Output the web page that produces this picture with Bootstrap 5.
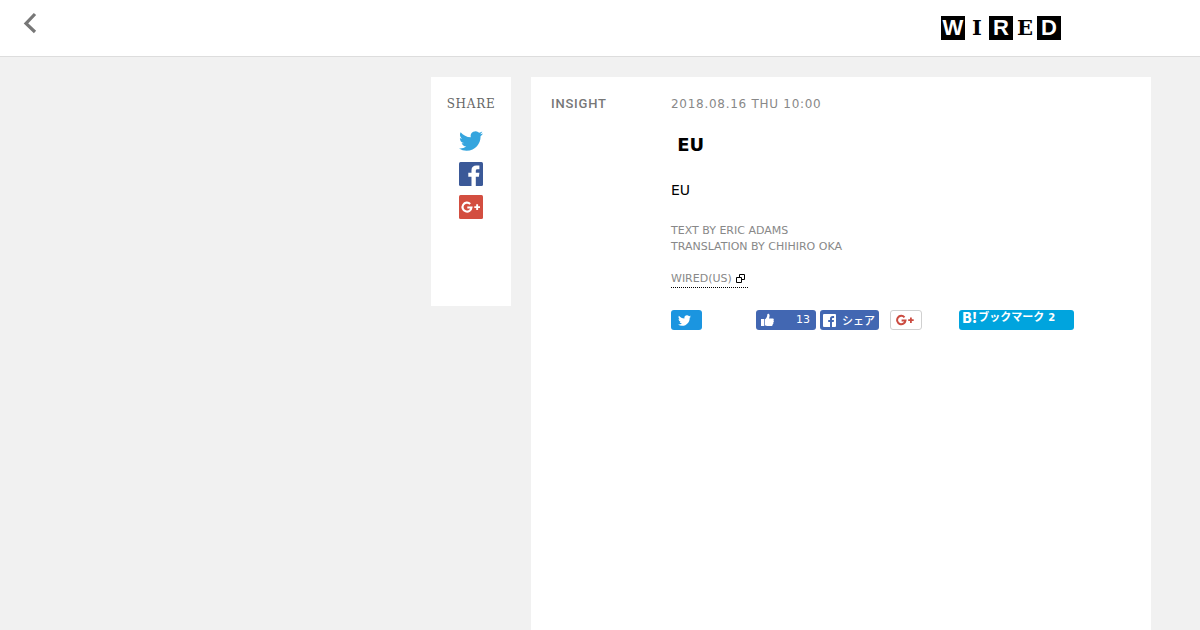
<!DOCTYPE html>
<html lang="ja">
<head>
<meta charset="utf-8">
<meta name="viewport" content="width=device-width, initial-scale=1">
<title>WIRED</title>
<link href="https://cdn.jsdelivr.net/npm/bootstrap@5.3.0/dist/css/bootstrap.min.css" rel="stylesheet">
<style>
body { background: #f1f1f1; color: #000; font-family: "DejaVu Sans", "Noto Sans CJK JP", sans-serif; font-size: 11px; line-height: 16px; }
svg { display: block; }
.site-header { height: 57px; border-bottom: 1px solid #ddd; padding: 0 139px 0 22px; }
.back-btn { margin-top: 12px; }
.logo { margin-top: 16px; font: bold 22px/24px "Liberation Sans", sans-serif; color: #000; }
.logo span { width: 24px; height: 24px; text-align: center; }
.logo .inv { background: #000; color: #fff; }
.logo .slab { font-family: "DejaVu Serif", serif; font-size: 21px; }
.page-wrap { gap: 20px; padding: 20px 49px 0 0; }
.share-box { width: 80px; height: 229px; padding-top: 18px; }
.share-title { font: 12px/18px "DejaVu Serif", serif; letter-spacing: .06em; color: #666; margin-bottom: 16px; }
.share-links { gap: 9px; }
.article { width: 620px; min-height: calc(100vh - 77px); padding: 18px 20px; }
.category { width: 120px; font: 500 13px/18px Roboto, sans-serif; letter-spacing: .06em; color: #777; }
.stamp { font-size: 12px; line-height: 18px; letter-spacing: .06em; color: #888; }
.headline { font-size: 18px; line-height: 24px; font-weight: 700; margin: 20px 0 23px; }
.lede { font-size: 14px; line-height: 20px; margin-bottom: 23px; }
.credit { color: #888; margin-bottom: 16px; }
.source { color: #888; border-bottom: 1px dotted #000; padding: 0 3px 0 0; gap: 4px; }
.source svg { margin-bottom: 2px; }
.social { margin-top: 22px; }
.social button { height: 20px; border: 0; border-radius: 3px; padding: 0 5px; color: #fff; font-size: 11px; line-height: 20px; }
.social .tw { width: 31px; background: #1b95e0; padding: 0 7px; margin-right: 54px; }
.social .fb { width: 60px; background: #4267b2; }
.social .fb-like { margin-right: 4px; padding-right: 6px; }
.social .fb-share { width: 59px; padding: 0 4px 0 3px; margin-right: 11px; font-weight: 500; font-family: "Noto Sans CJK JP", sans-serif; }
.social .gp { width: 32px; background: #fff; border: 1px solid #d0d0d0; margin-right: 37px; }
.social .hb { width: 115px; background: #00a4de; padding: 0 3px; font: bold 11px/15px "DejaVu Sans", "Noto Sans CJK JP", sans-serif; gap: 1px; }
.social .hb b { font: 900 14px/15px "Noto Sans CJK JP", sans-serif; }
.social .hb small { font-size: 10px; font-weight: 700; }
</style>
<script src="https://cdn.jsdelivr.net/npm/bootstrap@5.3.0/dist/js/bootstrap.bundle.min.js"></script>
</head>
<body>
<svg class="d-none" aria-hidden="true">
  <symbol id="bird" viewBox="0 0 24 24"><path d="M23.953 4.57a10 10 0 01-2.825.775 4.958 4.958 0 002.163-2.723c-.951.555-2.005.959-3.127 1.184a4.92 4.92 0 00-8.384 4.482C7.69 8.095 4.067 6.13 1.64 3.162a4.822 4.822 0 00-.666 2.475c0 1.71.87 3.213 2.188 4.096a4.904 4.904 0 01-2.228-.616v.06a4.923 4.923 0 003.946 4.827 4.996 4.996 0 01-2.212.085 4.936 4.936 0 004.604 3.417 9.867 9.867 0 01-6.102 2.105c-.39 0-.779-.023-1.17-.067a13.995 13.995 0 007.557 2.209c9.053 0 13.998-7.496 13.998-13.985 0-.21 0-.42-.015-.63A9.935 9.935 0 0024 4.59z"/></symbol>
  <symbol id="gplus" viewBox="0 0 20 12"><path d="M8.500 3.300A4.200 4.200 0 1 0 9.500 6.600H5.600" fill="none" stroke="currentColor" stroke-width="2"/><path d="M14 3.500h1.800v1.800h1.900v1.800h-1.900V9H14V7.100h-1.800V5.300H14z" fill="currentColor"/></symbol>
</svg>
<header class="site-header bg-white d-flex justify-content-between align-items-start">
  <button class="back-btn btn p-0 border-0" aria-label="Back"><svg width="16" height="22" viewBox="0 0 16 22"><path d="M13 2L4 11.500L13 20" fill="none" stroke="#777" stroke-width="3.200"/></svg></button>
  <a href="#" class="logo d-flex text-decoration-none" aria-label="WIRED"><span class="inv">W</span><span class="slab">I</span><span class="inv">R</span><span class="slab">E</span><span class="inv">D</span></a>
</header>
<main class="page-wrap d-flex justify-content-end align-items-start">
  <aside class="share-box bg-white text-center flex-shrink-0">
    <h2 class="share-title">SHARE</h2>
    <nav class="share-links d-flex flex-column align-items-center" aria-label="Share">
      <a href="#" aria-label="Twitter"><svg width="24" height="24" fill="#35a5de"><use href="#bird"/></svg></a>
      <a href="#" aria-label="Facebook"><svg width="24" height="24" viewBox="0 0 24 24"><rect width="24" height="24" rx="1.500" fill="#3b5998"/><path d="M12.500 24v-9.300H9.300v-3.900h3.200V8.200C12.500 5 14.500 3.500 17.400 3.500h3v3.700h-1.900c-1.300 0-1.700.7-1.700 1.700v1.900h3.600l-.5 3.900h-3.100V24z" fill="#fff"/></svg></a>
      <a href="#" aria-label="Google Plus"><svg width="24" height="24" viewBox="0 0 24 24"><rect width="24" height="24" rx="1.500" fill="#d34e40"/><path d="M11.200 8.900A4.500 4.500 0 1 0 12.500 12.500H8.300" fill="none" stroke="#fff" stroke-width="2.100"/><path d="M17.200 9.200h1.900v2H21v1.900h-1.900v2h-1.900v-2h-1.900v-1.900h1.900z" fill="#fff"/></svg></a>
    </nav>
  </aside>
  <article class="article bg-white d-flex align-items-start">
    <div class="category flex-shrink-0">INSIGHT</div>
    <div class="flex-grow-1">
      <time class="stamp d-block" datetime="2018-08-16T10:00">2018.08.16 THU 10:00</time>
      <h1 class="headline">&nbsp;EU</h1>
      <p class="lede">EU</p>
      <p class="credit">TEXT BY ERIC ADAMS<br>TRANSLATION BY CHIHIRO OKA</p>
      <a href="#" class="source d-inline-flex align-items-center text-decoration-none">WIRED(US)<svg width="9" height="9" viewBox="0 0 9 9" fill="none" stroke="#000"><path d="M.5 3.500h5v5h-5zM3.500 3V.5h5v5H6"/></svg></a>
      <div class="social d-flex">
        <button class="tw" aria-label="Tweet"><svg width="13" height="13" fill="#fff"><use href="#bird"/></svg></button>
        <button class="fb fb-like d-flex align-items-center justify-content-between"><svg width="13" height="14" viewBox="0 0 13 14" fill="#fff"><path d="M0 6h3.300v7H0zM4 6.300C5.500 5.400 6.300 3.500 6.300 1.500 6.500.4 8.600.6 8.600 2.600c0 1-.3 2-.6 2.900h3.500c1.300 0 1.700 1.300.9 2 .8.800.5 1.700-.2 2.100.5.8 0 1.600-.6 1.800.2 1-.4 1.600-1.500 1.600H6.700C5.500 13 5 12.400 4 12.400z"/></svg><span>13</span></button>
        <button class="fb fb-share d-flex align-items-center justify-content-between"><svg width="13" height="13" viewBox="0 0 13 13"><rect width="13" height="13" rx="1" fill="#fff"/><path d="M7 13V8H5.200V6H7V4.600C7 2.900 8.100 2 9.600 2h1.500v2h-1C9.300 4 9 4.300 9 4.900V6h2l-.3 2H9v5z" fill="#4267b2"/></svg><span>シェア</span></button>
        <button class="gp d-flex align-items-center" aria-label="Google Plus"><svg width="20" height="12" color="#cb4b40"><use href="#gplus"/></svg></button>
        <button class="hb d-flex align-items-start"><b>B!</b><span>ブックマーク <small>2</small></span></button>
      </div>
    </div>
  </article>
</main>
</body>
</html>
